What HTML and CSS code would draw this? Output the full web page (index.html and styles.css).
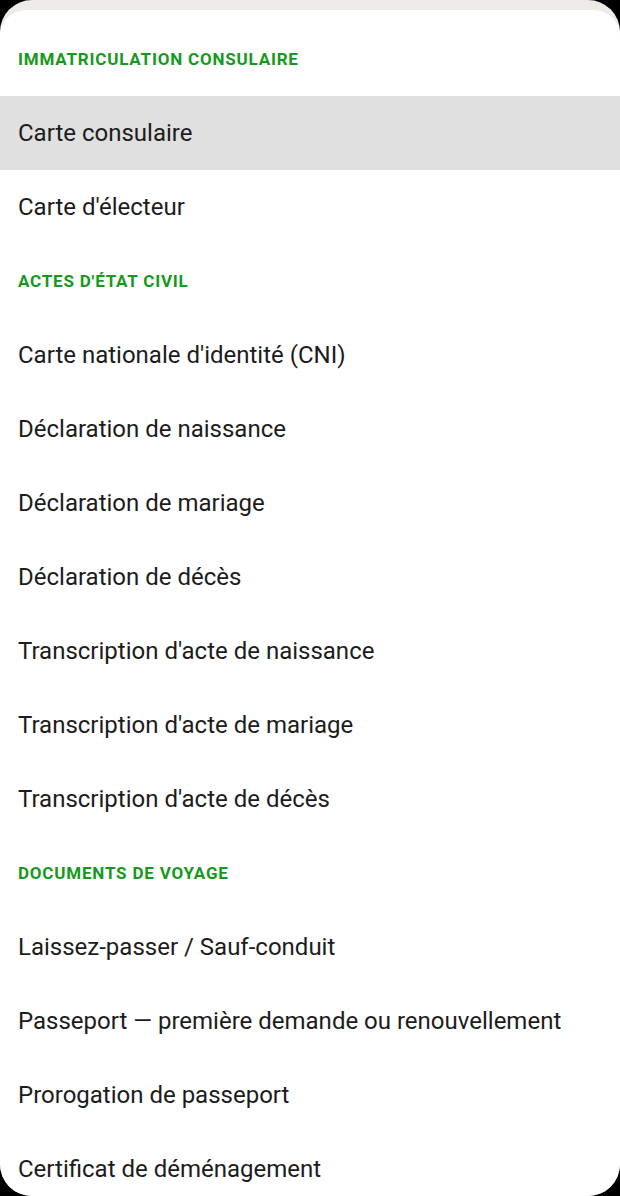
FILE: index.html
```html
<!DOCTYPE html>
<html lang="fr">
<head>
<meta charset="utf-8">
<title>Services consulaires</title>
<link rel="stylesheet" href="styles.css">
</head>
<body>
<div class="screen">
  <div class="sheet">
    <div class="section">Immatriculation consulaire</div>
    <div class="item active">Carte consulaire</div>
    <div class="item">Carte d'électeur</div>
    <div class="section">Actes d'état civil</div>
    <div class="item">Carte nationale d'identité (CNI)</div>
    <div class="item">Déclaration de naissance</div>
    <div class="item">Déclaration de mariage</div>
    <div class="item">Déclaration de décès</div>
    <div class="item">Transcription d'acte de naissance</div>
    <div class="item">Transcription d'acte de mariage</div>
    <div class="item">Transcription d'acte de décès</div>
    <div class="section">Documents de voyage</div>
    <div class="item">Laissez-passer / Sauf-conduit</div>
    <div class="item">Passeport — première demande ou renouvellement</div>
    <div class="item">Prorogation de passeport</div>
    <div class="item">Certificat de déménagement</div>
  </div>
</div>
</body>
</html>
```

FILE: styles.css
```css
html, body {
  margin: 0;
  padding: 0;
  background: #000;
}
body {
  font-family: Roboto, "Noto Sans", "Liberation Sans", sans-serif;
}
.screen {
  width: 620px;
  height: 1196px;
  border-radius: 32px;
  overflow: hidden;
  background: #eeebe6;
  padding-top: 10px;
  box-sizing: border-box;
}
.sheet {
  background: #fff;
  border-radius: 26px 26px 0 0;
  padding-top: 12px;
  min-height: 100%;
}
.section {
  height: 74px;
  display: flex;
  align-items: center;
  padding-left: 18px;
  color: #16991c;
  font-weight: 700;
  font-size: 17px;
  letter-spacing: 0.8px;
  text-transform: uppercase;
}
.item {
  height: 74px;
  display: flex;
  align-items: center;
  padding-left: 18px;
  color: #1c1c1c;
  font-size: 24px;
}
.item.active {
  background: #e0e0e0;
}
```
